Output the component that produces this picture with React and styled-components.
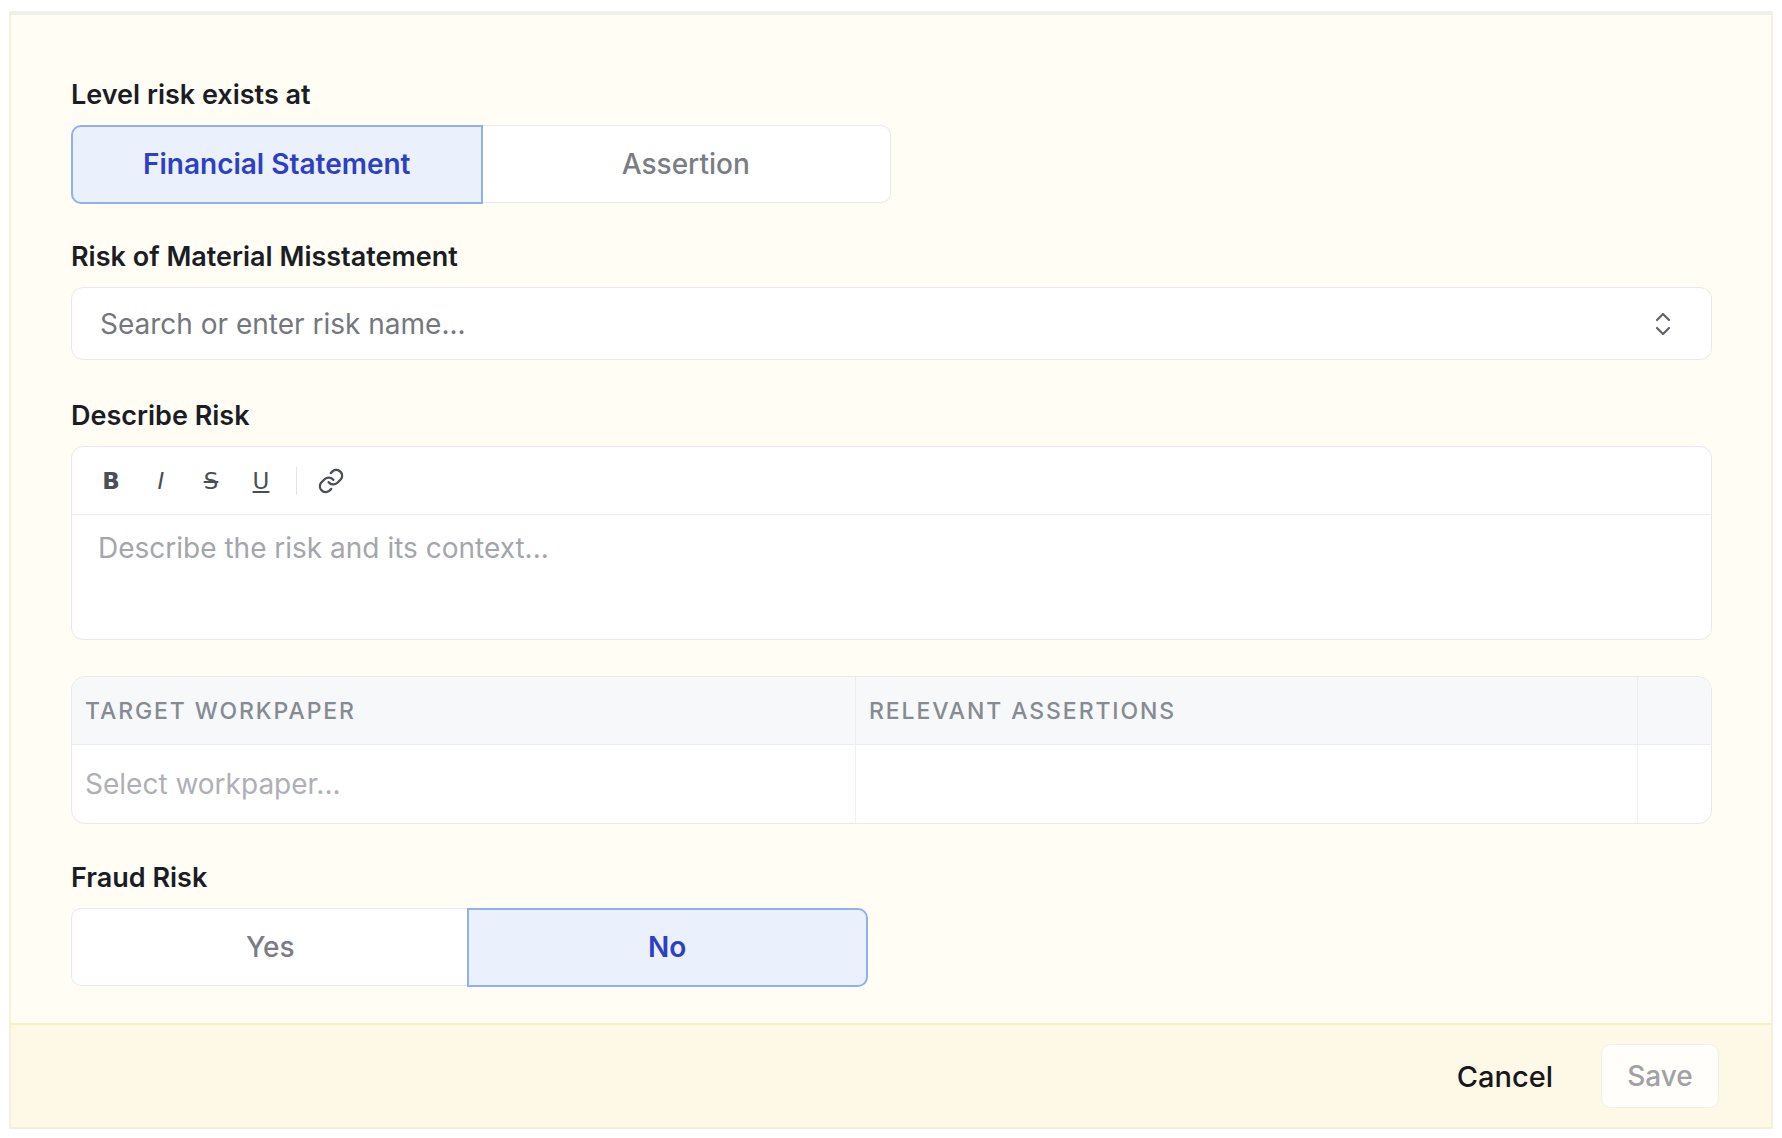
import React from "react";
import styled, { createGlobalStyle } from "styled-components";

const Global = createGlobalStyle`
  html, body { margin: 0; padding: 0; background: #ffffff; }
  body { font-family: Inter, "Noto Sans", sans-serif; }
  * { box-sizing: border-box; }
`;

const Page = styled.div`
  padding: 11px 9px 9px 9px;
  width: 1782px;
  height: 1138px;
`;

const Card = styled.div`
  width: 1764px;
  height: 1118px;
  background: #fffdf4;
  border: 2px solid #f3f1dc;
  border-top: 4px solid #eef0ee;
  display: flex;
  flex-direction: column;
`;

const Body = styled.div`
  flex: 1;
  padding: 63px 60px 0 60px;
  display: flex;
  flex-direction: column;
`;

const Label = styled.div`
  font-size: 27px;
  line-height: 34px;
  font-weight: 600;
  color: #1a1d24;
  margin-bottom: 13px;
  margin-top: ${p => p.$mt || 0}px;
`;

const Segment = styled.div`
  display: flex;
  width: ${p => p.$w}px;
  height: 78px;
  border: 1.5px solid #e8e9ec;
  border-radius: 10px;
  background: #fff;
`;

const SegBtn = styled.div`
  flex: 1;
  display: flex;
  align-items: center;
  justify-content: center;
  font-size: 28px;
  font-weight: ${p => (p.$active ? 600 : 500)};
  color: ${p => (p.$active ? "#2f3fc4" : "#7a7d84")};
  background: ${p => (p.$active ? "#eaf1fd" : "transparent")};
  border: ${p => (p.$active ? "2.5px solid #8db2ee" : "none")};
  border-radius: ${p => p.$radius};
  margin: ${p => (p.$active ? "-1.5px" : "0")};
`;

const Input = styled.div`
  height: 73px;
  width: 1641px;
  border: 1.5px solid #e8e9ec;
  border-radius: 12px;
  background: #fff;
  display: flex;
  align-items: center;
  justify-content: space-between;
  padding: 0 38px 0 28px;
  font-size: 28px;
  color: #74777e;
`;

const Editor = styled.div`
  width: 1641px;
  height: 194px;
  border: 1.5px solid #e8e9ec;
  border-radius: 12px;
  background: #fff;
  display: flex;
  flex-direction: column;
`;

const Toolbar = styled.div`
  height: 68px;
  border-bottom: 1.5px solid #ecedef;
  display: flex;
  align-items: center;
  padding: 0 24px;
  gap: 20px;
`;

const ToolBtn = styled.span`
  width: 30px;
  display: flex;
  justify-content: center;
  font-family: "DejaVu Sans", sans-serif;
  font-size: 23px;
  color: #4a4e55;
  font-weight: ${p => (p.$b ? 600 : 400)};
  font-style: ${p => (p.$i ? "italic" : "normal")};
  text-decoration: ${p => p.$deco || "none"};
`;

const Divider = styled.span`
  width: 1px;
  height: 28px;
  background: #e3e4e7;
`;

const Placeholder = styled.div`
  padding: 16px 26px;
  font-size: 28px;
  color: #a4a6ab;
`;

const Table = styled.div`
  margin-top: 36px;
  width: 1641px;
  border: 1.5px solid #e8e9ec;
  border-radius: 14px;
  overflow: hidden;
  background: #fff;
  display: grid;
  grid-template-columns: 784px 782px 1fr;
`;

const Th = styled.div`
  height: 68px;
  background: #f6f8fa;
  border-bottom: 1.5px solid #ecedef;
  border-right: ${p => (p.$last ? "none" : "1.5px solid #ecedef")};
  display: flex;
  align-items: center;
  padding: 0 13px;
  font-size: 23px;
  font-weight: 500;
  letter-spacing: 1.9px;
  color: #868a91;
`;

const Td = styled.div`
  height: 78px;
  border-right: ${p => (p.$last ? "none" : "1.5px solid #f0f1f3")};
  display: flex;
  align-items: center;
  padding: 0 13px;
  font-size: 28px;
  color: #aeb0b5;
`;

const Footer = styled.div`
  height: 104px;
  background: #fef9e6;
  border-top: 2px solid #f7efc6;
  display: flex;
  align-items: center;
  justify-content: flex-end;
  padding: 0 52px 0 0;
  gap: 48px;
`;

const Cancel = styled.span`
  font-size: 29px;
  font-weight: 500;
  color: #16181d;
`;

const Save = styled.div`
  width: 118px;
  height: 64px;
  border: 1.5px solid #f0efe8;
  border-radius: 10px;
  background: #fffefa;
  display: flex;
  align-items: center;
  justify-content: center;
  font-size: 28px;
  font-weight: 500;
  color: #a0a2a6;
`;

const Chevron = () => (
  <svg width="20" height="30" viewBox="0 0 20 30" fill="none" stroke="#5f636a" strokeWidth="2.2" strokeLinecap="round" strokeLinejoin="round">
    <path d="M4 11 L10 5 L16 11" />
    <path d="M4 19 L10 25 L16 19" />
  </svg>
);

const LinkIcon = () => (
  <svg width="28" height="28" viewBox="0 0 24 24" fill="none" stroke="#4a4e55" strokeWidth="2" strokeLinecap="round" strokeLinejoin="round">
    <path d="M10 13a5 5 0 0 0 7.5.5l3-3a5 5 0 0 0-7-7l-1.7 1.7" />
    <path d="M14 11a5 5 0 0 0-7.5-.5l-3 3a5 5 0 0 0 7 7l1.7-1.7" />
  </svg>
);

export default function App() {
  return (
    <>
      <Global />
      <Page>
        <Card>
          <Body>
            <Label>Level risk exists at</Label>
            <Segment $w={820}>
              <SegBtn $active $radius="10px 0 0 10px">Financial Statement</SegBtn>
              <SegBtn>Assertion</SegBtn>
            </Segment>

            <Label $mt={37}>Risk of Material Misstatement</Label>
            <Input>
              <span>Search or enter risk name...</span>
              <Chevron />
            </Input>

            <Label $mt={39}>Describe Risk</Label>
            <Editor>
              <Toolbar>
                <ToolBtn $b>B</ToolBtn>
                <ToolBtn $i>I</ToolBtn>
                <ToolBtn $deco="line-through">S</ToolBtn>
                <ToolBtn $deco="underline">U</ToolBtn>
                <Divider />
                <LinkIcon />
              </Toolbar>
              <Placeholder>Describe the risk and its context...</Placeholder>
            </Editor>

            <Table>
              <Th>TARGET WORKPAPER</Th>
              <Th>RELEVANT ASSERTIONS</Th>
              <Th $last />
              <Td>Select workpaper...</Td>
              <Td />
              <Td $last />
            </Table>

            <Label $mt={37}>Fraud Risk</Label>
            <Segment $w={796}>
              <SegBtn>Yes</SegBtn>
              <SegBtn $active $radius="0 10px 10px 0">No</SegBtn>
            </Segment>
          </Body>
          <Footer>
            <Cancel>Cancel</Cancel>
            <Save>Save</Save>
          </Footer>
        </Card>
      </Page>
    </>
  );
}
